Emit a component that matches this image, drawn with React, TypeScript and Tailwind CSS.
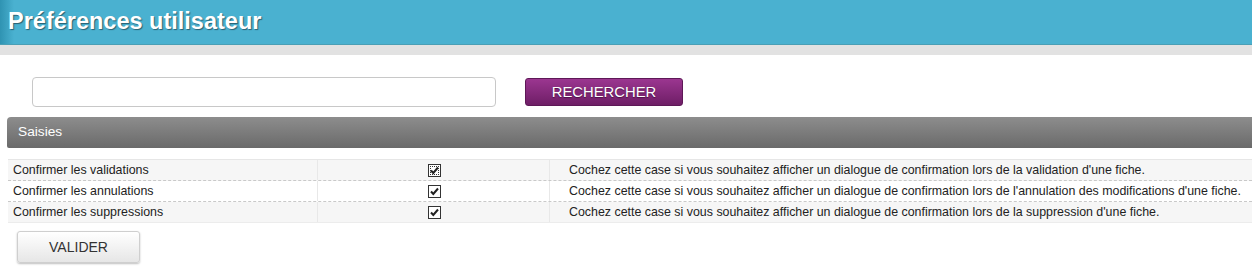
import { useState } from "react";

const rows = [
  {
    label: "Confirmer les validations",
    desc: "Cochez cette case si vous souhaitez afficher un dialogue de confirmation lors de la validation d'une fiche.",
    focus: true,
  },
  {
    label: "Confirmer les annulations",
    desc: "Cochez cette case si vous souhaitez afficher un dialogue de confirmation lors de l'annulation des modifications d'une fiche.",
  },
  {
    label: "Confirmer les suppressions",
    desc: "Cochez cette case si vous souhaitez afficher un dialogue de confirmation lors de la suppression d'une fiche.",
  },
];

function Check({ focus }: { focus?: boolean }) {
  return (
    <span
      className={`inline-flex w-[13px] h-[13px] border border-[#333] bg-white items-center justify-center ${
        focus ? "outline-1 outline-dotted outline-[#333] outline-offset-[-3px] bg-[#e8e8e8]" : ""
      }`}
    >
      <svg width="11" height="11" viewBox="0 0 11 11">
        <path d="M2 5.5 L4.3 8 L9 2.5" fill="none" stroke="#222" strokeWidth="2" />
      </svg>
    </span>
  );
}

export default function App() {
  const [query, setQuery] = useState("");

  return (
    <div className="w-[1252px] h-[277px] bg-white font-['Liberation_Sans',Arial,sans-serif] overflow-hidden">
      {/* Titre */}
      <div className="h-[45px] bg-[linear-gradient(to_right,#2f93b2_0px,#4ab1d0_14px,#4ab1d0_100%)] border-b border-[#4a9fb5] flex items-start pl-[8px] pt-[7px]">
        <h1 className="text-[23.5px] font-bold text-white leading-[28px] [text-shadow:1px_1px_1px_#2a5f70]">
          Préférences utilisateur
        </h1>
      </div>
      <div className="h-[10px] bg-[#e2e2e2]" />

      {/* Recherche */}
      <div className="flex items-center pt-[22px] pl-[32px] gap-[29px]">
        <input
          type="text"
          value={query}
          onChange={(e) => setQuery(e.target.value)}
          className="w-[464px] h-[30px] border border-[#c8c8c8] rounded-[4px] bg-white outline-none px-2 text-[13px]"
        />
        <button className="w-[158px] h-[28px] rounded-[3px] bg-[linear-gradient(#9b3690,#6e1e66)] text-white text-[14.8px] border border-[#5e1857] [text-shadow:0_1px_1px_#4a1244]">
          RECHERCHER
        </button>
      </div>

      {/* Section */}
      <div className="ml-[7px] mt-[10px] h-[31px] rounded-tl-[4px] rounded-bl-[2px] bg-[linear-gradient(#8d8d8d,#6a6a6a)] flex items-center pl-[11px]">
        <span className="text-white text-[13.7px]">Saisies</span>
      </div>

      <div className="ml-[8px] mt-[11px] border-t border-[#e6e6e6] text-[12.4px] text-[#222]">
        {rows.map((r, i) => (
          <div
            key={i}
            className={`flex h-[21px] items-center ${i % 2 === 0 ? "bg-[#f6f6f6]" : "bg-white"} ${
              i < rows.length - 1 ? "border-b border-dashed border-[#c9c9c9]" : "border-b border-[#ececec]"
            }`}
          >
            <div className="w-[310px] pl-[5px] h-full flex items-center border-r border-[#e8e8e8]">{r.label}</div>
            <div className="w-[232px] h-full flex items-center justify-center pl-[1px] border-r border-[#e8e8e8]">
              <Check focus={r.focus} />
            </div>
            <div className="flex-1 pl-[19px] whitespace-nowrap">{r.desc}</div>
          </div>
        ))}
      </div>

      <div className="pl-[17px] pt-[8px]">
        <button className="w-[123px] h-[32px] rounded-[3px] border border-[#cfcfcf] bg-[linear-gradient(#ffffff,#e6e6e6)] shadow-[0_1px_2px_rgba(0,0,0,0.25)] text-[14px] text-[#333]">
          VALIDER
        </button>
      </div>
    </div>
  );
}
